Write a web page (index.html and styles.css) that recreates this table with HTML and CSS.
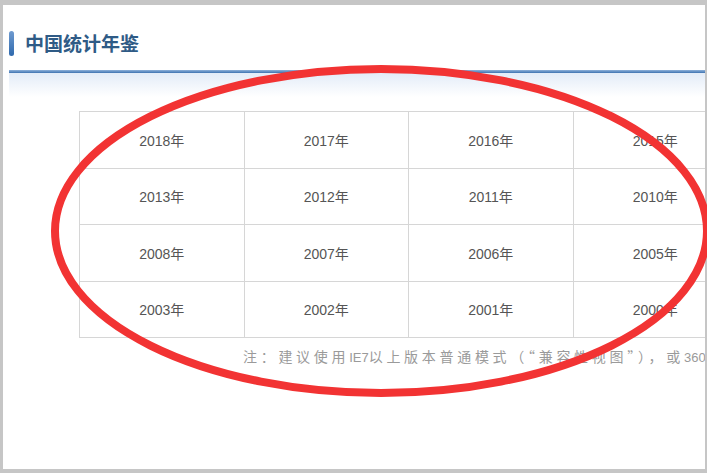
FILE: index.html
```html
<!DOCTYPE html>
<html lang="zh">
<head>
<meta charset="utf-8">
<title>中国统计年鉴</title>
<link rel="stylesheet" href="styles.css">
</head>
<body>
<div class="frame">
  <div class="header">
    <span class="marker"></span>
    <h1 class="title">中国统计年鉴</h1>
  </div>
  <div class="rule"></div>
  <div class="fade"></div>
  <div class="content">
    <table class="years">
      <tr><td>2018年</td><td>2017年</td><td>2016年</td><td>2015年</td></tr>
      <tr><td>2013年</td><td>2012年</td><td>2011年</td><td>2010年</td></tr>
      <tr><td>2008年</td><td>2007年</td><td>2006年</td><td>2005年</td></tr>
      <tr><td>2003年</td><td>2002年</td><td>2001年</td><td>2000年</td></tr>
    </table>
    <p class="note">注：建议使用<span class="ascii">IE7</span>以上版本普通模式（“兼容性视图”），或<span class="ascii">360</span></p>
  </div>
  <svg class="circle" width="707" height="473" viewBox="0 0 707 473">
    <ellipse cx="381" cy="231" rx="326" ry="162" fill="none" stroke="#f23333" stroke-width="8"/>
  </svg>
</div>
</body>
</html>
```
FILE: styles.css
```css
html, body {
  margin: 0;
  padding: 0;
  height: 100%;
  overflow: hidden;
}
body {
  background: #c6c6c6;
  font-family: "Liberation Sans", "Noto Sans CJK SC", sans-serif;
}
.frame {
  margin: 5px 2px 0 3px;
  height: 464px;
  background: #ffffff;
  overflow: hidden;
}
.header {
  display: flex;
  align-items: center;
  gap: 11px;
  padding: 25px 0 0 6px;
  height: 26px;
}
.marker {
  width: 5px;
  height: 25px;
  border-radius: 3px;
  background: linear-gradient(to bottom, #6f9bd0, #2f69ad);
}
.title {
  margin: 0;
  font-size: 19px;
  font-weight: bold;
  color: #2f5b86;
  font-family: "Noto Sans CJK SC", sans-serif;
  line-height: 26px;
}
.rule {
  margin: 14px 0 0 6px;
  height: 3px;
  background: linear-gradient(to bottom, #8fb2da, #3e73b1);
}
.fade {
  margin-left: 6px;
  height: 24px;
  background: linear-gradient(to bottom, #e3ecf8, #ffffff);
}
.content {
  padding: 14px 0 0 76px;
}
.years {
  border-collapse: collapse;
  table-layout: fixed;
  width: 656px;
}
.years td {
  width: 163.5px;
  height: 55.5px;
  padding: 0;
  border: 1px solid #d6d6d6;
  text-align: center;
  color: #555555;
  font-size: 14px;
  font-family: "Liberation Sans", "Noto Sans CJK SC", sans-serif;
}
.note {
  margin: 8px 0 0 164px;
  font-size: 14px;
  color: #9a9a9a;
  white-space: nowrap;
  font-family: "Noto Sans CJK SC", sans-serif;
  letter-spacing: 3.7px;
}
.ascii {
  letter-spacing: 0;
  font-family: "Liberation Sans", sans-serif;
  font-size: 13px;
}
.circle {
  position: absolute;
  left: 0;
  top: 0;
  pointer-events: none;
}
```
